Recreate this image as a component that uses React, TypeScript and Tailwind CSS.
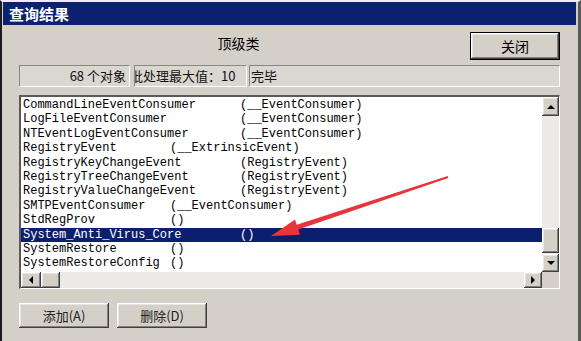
import React from "react";

const rows: [string, string, number][] = [
  ["CommandLineEventConsumer", "(__EventConsumer)", 2],
  ["LogFileEventConsumer", "(__EventConsumer)", 2],
  ["NTEventLogEventConsumer", "(__EventConsumer)", 2],
  ["RegistryEvent", "(__ExtrinsicEvent)", 1],
  ["RegistryKeyChangeEvent", "(RegistryEvent)", 2],
  ["RegistryTreeChangeEvent", "(RegistryEvent)", 2],
  ["RegistryValueChangeEvent", "(RegistryEvent)", 2],
  ["SMTPEventConsumer", "(__EventConsumer)", 1],
  ["StdRegProv", "()", 1],
  ["System_Anti_Virus_Core", "()", 2],
  ["SystemRestore", "()", 1],
  ["SystemRestoreConfig", "()", 1],
];

const raised =
  "bg-[#d4d0c8] shadow-[inset_-1px_-1px_#404040,inset_1px_1px_#ffffff,inset_-2px_-2px_#808080,inset_2px_2px_#e8e6e2]";

function Tri({ dir }: { dir: "up" | "down" | "left" | "right" }) {
  const pts =
    dir === "up"
      ? "0,4 4,0 8,4"
      : dir === "down"
      ? "0,0 8,0 4,4"
      : dir === "left"
      ? "4,0 4,8 0,4"
      : "0,0 4,4 0,8";
  const w = dir === "up" || dir === "down" ? 8 : 4;
  const h = dir === "up" || dir === "down" ? 4 : 8;
  return (
    <svg width={w} height={h} viewBox={`0 0 ${w} ${h}`}>
      <polygon points={pts} fill="#000" />
    </svg>
  );
}

export default function App() {
  const cjk = { fontFamily: '"Noto Sans CJK SC", "Noto Sans", sans-serif' };
  return (
    <div
      className="relative w-[581px] h-[341px] overflow-hidden bg-[#d4d0c8] border-l-2 border-l-[#1c1c1c] border-r-[3px] border-r-[#5a5a5a] border-t-2 border-t-[#f3ecec] flex flex-col"
      style={cjk}
    >
      {/* title bar */}
      <div className="ml-[1px] mr-[2px] h-[23px] bg-[#0c2170] flex items-center pl-[6px] text-white font-bold text-[15px] leading-none">
        查询结果
      </div>

      <div className="flex flex-col pl-[17px] pr-[18px]">
        {/* header row */}
        <div className="mt-[7px] h-[28px] flex">
          <div className="flex-1 flex justify-center pt-[1px] text-[14px] leading-[20px] text-black pr-[12px]">
            顶级类
          </div>
          <div className="w-[90px] h-[28px] border border-black">
            <div className={`${raised} w-full h-full flex items-center justify-center text-[14px] text-black`}>
              关闭
            </div>
          </div>
        </div>

        {/* status row */}
        <div className="mt-[5px] h-[22px] flex text-[13px] leading-[20px] text-[#111]">
          <div className="w-[111px] border-t border-l border-t-[#8a8782] border-l-[#8a8782] border-b border-r border-b-white border-r-white bg-[#dad7d1] flex justify-end pr-[3px] whitespace-nowrap overflow-hidden">
            68 个对象
          </div>
          <div className="ml-[4px] w-[113px] border-t border-l border-t-[#8a8782] border-l-[#8a8782] border-b border-r border-b-white border-r-white bg-[#dad7d1] overflow-hidden whitespace-nowrap">
            <span className="inline-block ml-[-5px]">批处理最大值：10</span>
          </div>
          <div className="ml-[2px] flex-1 border-t border-l border-t-[#8a8782] border-l-[#8a8782] border-b border-r border-b-white border-r-white bg-[#dad7d1] pl-[1px] whitespace-nowrap">
            完毕
          </div>
        </div>

        {/* list box */}
        <div className="mt-[8px] h-[194px] border-t-2 border-l-2 border-t-[#5c5a56] border-l-[#5c5a56] border-b border-r border-b-white border-r-white bg-white grid grid-cols-[1fr_17px] grid-rows-[1fr_16px]">
          <div className="pt-[1px] overflow-hidden" style={{ fontFamily: '"Liberation Mono", monospace' }}>
            {rows.map(([name, val, col], i) => (
              <div
                key={i}
                className={`h-[14.4px] leading-[14.4px] text-[12px] whitespace-nowrap pl-[2px] ${
                  name === "System_Anti_Virus_Core" ? "bg-[#0c1f6e] text-white" : "text-black"
                }`}
              >
                <span className={`inline-block ${col === 1 ? "w-[147px]" : "w-[217px]"}`}>{name}</span>
                <span>{val}</span>
              </div>
            ))}
          </div>
          {/* vertical scrollbar */}
          <div className="flex flex-col bg-[#eceae6]">
            <div className={`${raised} h-[19px] flex items-center justify-center`}>
              <Tri dir="up" />
            </div>
            <div className="flex-1" />
            <div className={`${raised} h-[25px]`} />
            <div className="h-[1px]" />
            <div className={`${raised} h-[18px] flex items-center justify-center`}>
              <Tri dir="down" />
            </div>
          </div>
          {/* horizontal scrollbar */}
          <div className="flex bg-[#eceae6]">
            <div className={`${raised} w-[20px] flex items-center justify-center`}>
              <Tri dir="left" />
            </div>
            <div className={`${raised} w-[19px]`} />
            <div className="flex-1" />
            <div className={`${raised} w-[18px] flex items-center justify-center`}>
              <Tri dir="right" />
            </div>
          </div>
          <div className="bg-[#d4d0c8]" />
        </div>

        {/* bottom buttons */}
        <div className="mt-[14px] flex gap-[8px]">
          <div className={`${raised} w-[90px] h-[25px] flex items-center justify-center text-[13px] text-[#222]`}>
            添加(A)
          </div>
          <div className={`${raised} w-[90px] h-[25px] flex items-center justify-center text-[13px] text-[#222]`}>
            删除(D)
          </div>
        </div>
      </div>

      {/* red annotation arrow */}
      <svg className="absolute left-0 top-0 pointer-events-none" width="581" height="341" viewBox="0 0 581 341" style={{ left: -2, top: -2 }}>
        <polygon
          points="271,236 300,234.8 298.3,229.6 448.3,178 447.7,176.1 296.7,224.8 295,219.6"
          fill="#e8353c"
        />
      </svg>
    </div>
  );
}
